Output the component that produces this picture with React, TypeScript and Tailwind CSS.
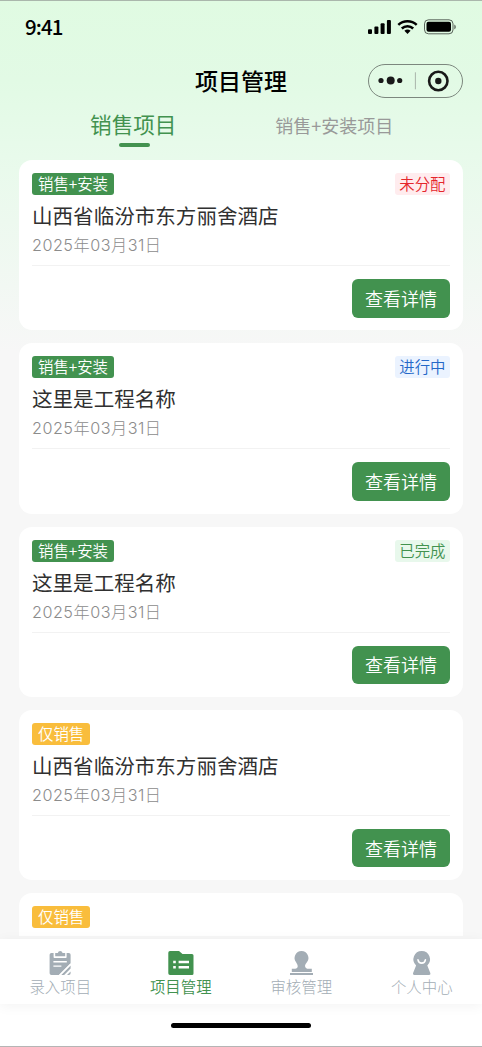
import type { ReactNode } from "react";

type Card = { sale: boolean; title?: string; status?: string; tone?: string };

const cards: Card[] = [
  { sale: false, title: "山西省临汾市东方丽舍酒店", status: "未分配", tone: "bg-[#ffecee] text-[#e5252b]" },
  { sale: false, title: "这里是工程名称", status: "进行中", tone: "bg-[#ebf3ff] text-[#2468c8]" },
  { sale: false, title: "这里是工程名称", status: "已完成", tone: "bg-[#e8f8ec] text-[#42924f]" },
  { sale: true, title: "山西省临汾市东方丽舍酒店" },
  { sale: true },
];

function StatusBar() {
  return (
    <div className="flex h-[52px] items-center justify-between pl-[25px] pr-[25px]">
      <span className="-mt-[2px] text-[20.5px] leading-[24px] font-medium tracking-[-0.9px] text-black">9:41</span>
      <svg width="90" height="18" viewBox="0 0 90 18" fill="#000">
        <rect x="1" y="11.2" width="4" height="4.8" rx="1" />
        <rect x="7.4" y="8.4" width="4" height="7.6" rx="1" />
        <rect x="13.6" y="5.2" width="4" height="10.8" rx="1" />
        <rect x="19.9" y="2" width="4" height="14" rx="1" />
        <g fill="none" stroke="#000" strokeWidth="2.5">
          <path d="M31.3 6.9a13.4 13.4 0 0 1 18.4 0" />
          <path d="M34.8 10.5a8.3 8.3 0 0 1 11.4 0" />
        </g>
        <path d="M37.4 12.8a4.8 4.8 0 0 1 6.2 0L40.5 16z" />
        <rect x="57.5" y="1.8" width="28.5" height="14" rx="4" fill="none" stroke="#000" strokeOpacity=".6" strokeWidth="1" />
        <rect x="59.5" y="3.8" width="24.5" height="10" rx="2" />
        <path d="M87.3 6.5c2 .8 2 4 0 4.8z" opacity=".6" />
      </svg>
    </div>
  );
}

function Header() {
  return (
    <div className="grid h-[56px] grid-cols-[1fr_auto_1fr] items-center px-[19px]">
      <span />
      <h1 className="-mt-[3px] text-[23px] leading-[30px] font-medium text-black">项目管理</h1>
      <svg className="justify-self-end" width="95" height="34" viewBox="0 0 95 34">
        <rect x=".5" y=".5" width="94" height="33" rx="16.5" fill="none" stroke="#7c877e" />
        <g fill="#191919">
          <circle cx="13" cy="16.5" r="2.6" />
          <circle cx="22.7" cy="16.5" r="4" />
          <circle cx="31.7" cy="16.5" r="2.6" />
          <circle cx="70.3" cy="17" r="3.2" />
        </g>
        <path d="M47.4 8.3v17" stroke="#a9b5ab" />
        <circle cx="70.3" cy="17" r="9.2" fill="none" stroke="#191919" strokeWidth="2.6" />
      </svg>
    </div>
  );
}

function ProjectCard({ sale, title, status, tone }: Card) {
  return (
    <article className="h-[170.4px] shrink-0 rounded-[13px] bg-white px-[13px] pt-[13px]">
      <div className="flex justify-between">
        <span className={`flex h-[22px] items-center rounded-[3px] px-[6px] pb-px text-[15.4px] leading-[21px] font-[350] text-white ${sale ? "bg-[#f9bd3c]" : "bg-[#42924f]"}`}>
          {sale ? "仅销售" : "销售+安装"}
        </span>
        {status && <span className={`flex h-[22px] items-center rounded-[3px] px-[4.5px] pb-px text-[15.4px] leading-[21px] font-[350] ${tone}`}>{status}</span>}
      </div>
      {title && (
        <>
          <h2 className="mt-[5px] text-[20.56px] leading-[30px] font-normal text-[#303030]">{title}</h2>
          <p className="mt-[4px] font-['Inter','Noto_Sans_CJK_SC',sans-serif] text-[16.2px] leading-[22px] font-light tracking-[0.5px] text-[#8c8c8c]">2025年03月31日</p>
          <div className="mt-[9px] h-px bg-[#f2f2f2]" />
          <div className="mt-[13px] flex justify-end">
            <button className="h-[38.6px] w-[98px] rounded-[6px] bg-[#42924f] pb-px text-[18px] leading-[26px] font-[350] text-white">查看详情</button>
          </div>
        </>
      )}
    </article>
  );
}

function TabItem({ label, active, children }: { label: string; active?: boolean; children: ReactNode }) {
  return (
    <div className={`flex flex-1 flex-col items-center pt-[11px] text-[15.4px] leading-[22px] ${active ? "font-[350] text-[#42924f]" : "font-light text-[#a3adb5]"}`}>
      <svg width="30" height="26" viewBox="0 0 30 26" fill="currentColor">{children}</svg>
      <span className="-mt-px">{label}</span>
    </div>
  );
}

export default function App() {
  return (
    <div className="flex h-[1047px] w-[482px] flex-col overflow-hidden border-t border-b border-t-[#aab7ac] border-b-[#b5b5b5] bg-[#f7f7f7] bg-[linear-gradient(180deg,#e0fbe2_0px,#e2fae5_80px,#e8faeb_155px,#f7f7f7_350px)] font-['Noto_Sans_CJK_SC',sans-serif]">
      <StatusBar />
      <Header />
      <nav className="grid h-[51px] shrink-0 grid-cols-2 pl-[33px] pr-[48px] pt-px">
        <div className="flex flex-col items-center">
          <span className="text-[21.6px] leading-[28px] text-[#42924f]">销售项目</span>
          <span className="ml-[2px] mt-[5px] h-[4px] w-[31px] rounded-[2px] bg-[#42924f]" />
        </div>
        <span className="pl-px text-center text-[18px] leading-[31px] text-[#999]">销售+安装项目</span>
      </nav>
      <main className="flex h-[776px] shrink-0 flex-col gap-[12.9px] overflow-hidden px-[19px]">
        {cards.map((c, i) => <ProjectCard key={i} {...c} />)}
      </main>
      <div className="mt-[3px] flex flex-1 flex-col bg-white">
        <nav className="flex h-[65px] shrink-0 bg-white shadow-[0_2px_12px_rgba(0,0,0,0.05)]">
          <TabItem label="录入项目">
            <g transform="translate(.6 0)">
              <path d="M5.8 3H8v4.2q0 .8.8.8h11.4q.8 0 .8-.8V3h2.2q1.8 0 1.8 1.8v8.4L13.2 25H5.8Q4 25 4 23.2V4.8Q4 3 5.8 3z" />
              <path d="M9.6 3h2.6q.5-2 2.4-2T17 3h2.6v3.2H9.6zM25 15.6v3L18.6 25h-3zM25 21.4v1.8q0 1.8-1.8 1.8h-1.8z" />
              <path d="M7.8 11.7h13.4M7.8 16.1h8" stroke="#fff" strokeWidth="1.4" />
              <path d="M14.2 25.2L25.2 14.2" stroke="#fff" strokeWidth="1.2" />
            </g>
          </TabItem>
          <TabItem label="项目管理" active>
            <path d="M4 1h9l3.5 3H26q1.5 0 1.5 1.5v18Q27.5 25 26 25H4q-1.7 0-1.7-1.7V2.7Q2.3 1 4 1z" />
            <path d="M7.2 12h2.6M12.6 12H23M7.2 17.2h2.6M12.6 17.2H23" stroke="#fff" strokeWidth="2.4" strokeLinecap="butt" />
          </TabItem>
          <TabItem label="审核管理">
            <path d="M15.5 1a6.9 6.9 0 0 1 5.4 11.2c-1.8 2.1-2.2 3.4-1.6 4.7.4 1 1.4 1.8 3 1.8h3.5V22H5.8v-3.3h3.4q1.8 0 2.5-1.8.5-1.5-1.6-4.7A6.9 6.9 0 0 1 15.5 1zM4 23h23v1.9H4z" />
          </TabItem>
          <TabItem label="个人中心">
            <path d="M14.7 1a8.3 8.3 0 0 1 5.6 14.4l3.1 7.8q.4 1.8-1.3 1.8H7.3q-1.7 0-1.3-1.8l3.1-7.8A8.3 8.3 0 0 1 14.7 1z" />
            <path d="M11 9.8q.6 3.3 3.7 3.3t3.7-3.3" fill="none" stroke="#fff" strokeWidth="1.6" strokeLinecap="round" />
          </TabItem>
        </nav>
        <div className="mx-auto mt-[19px] h-[5px] w-[140px] rounded-full bg-black" />
      </div>
    </div>
  );
}
